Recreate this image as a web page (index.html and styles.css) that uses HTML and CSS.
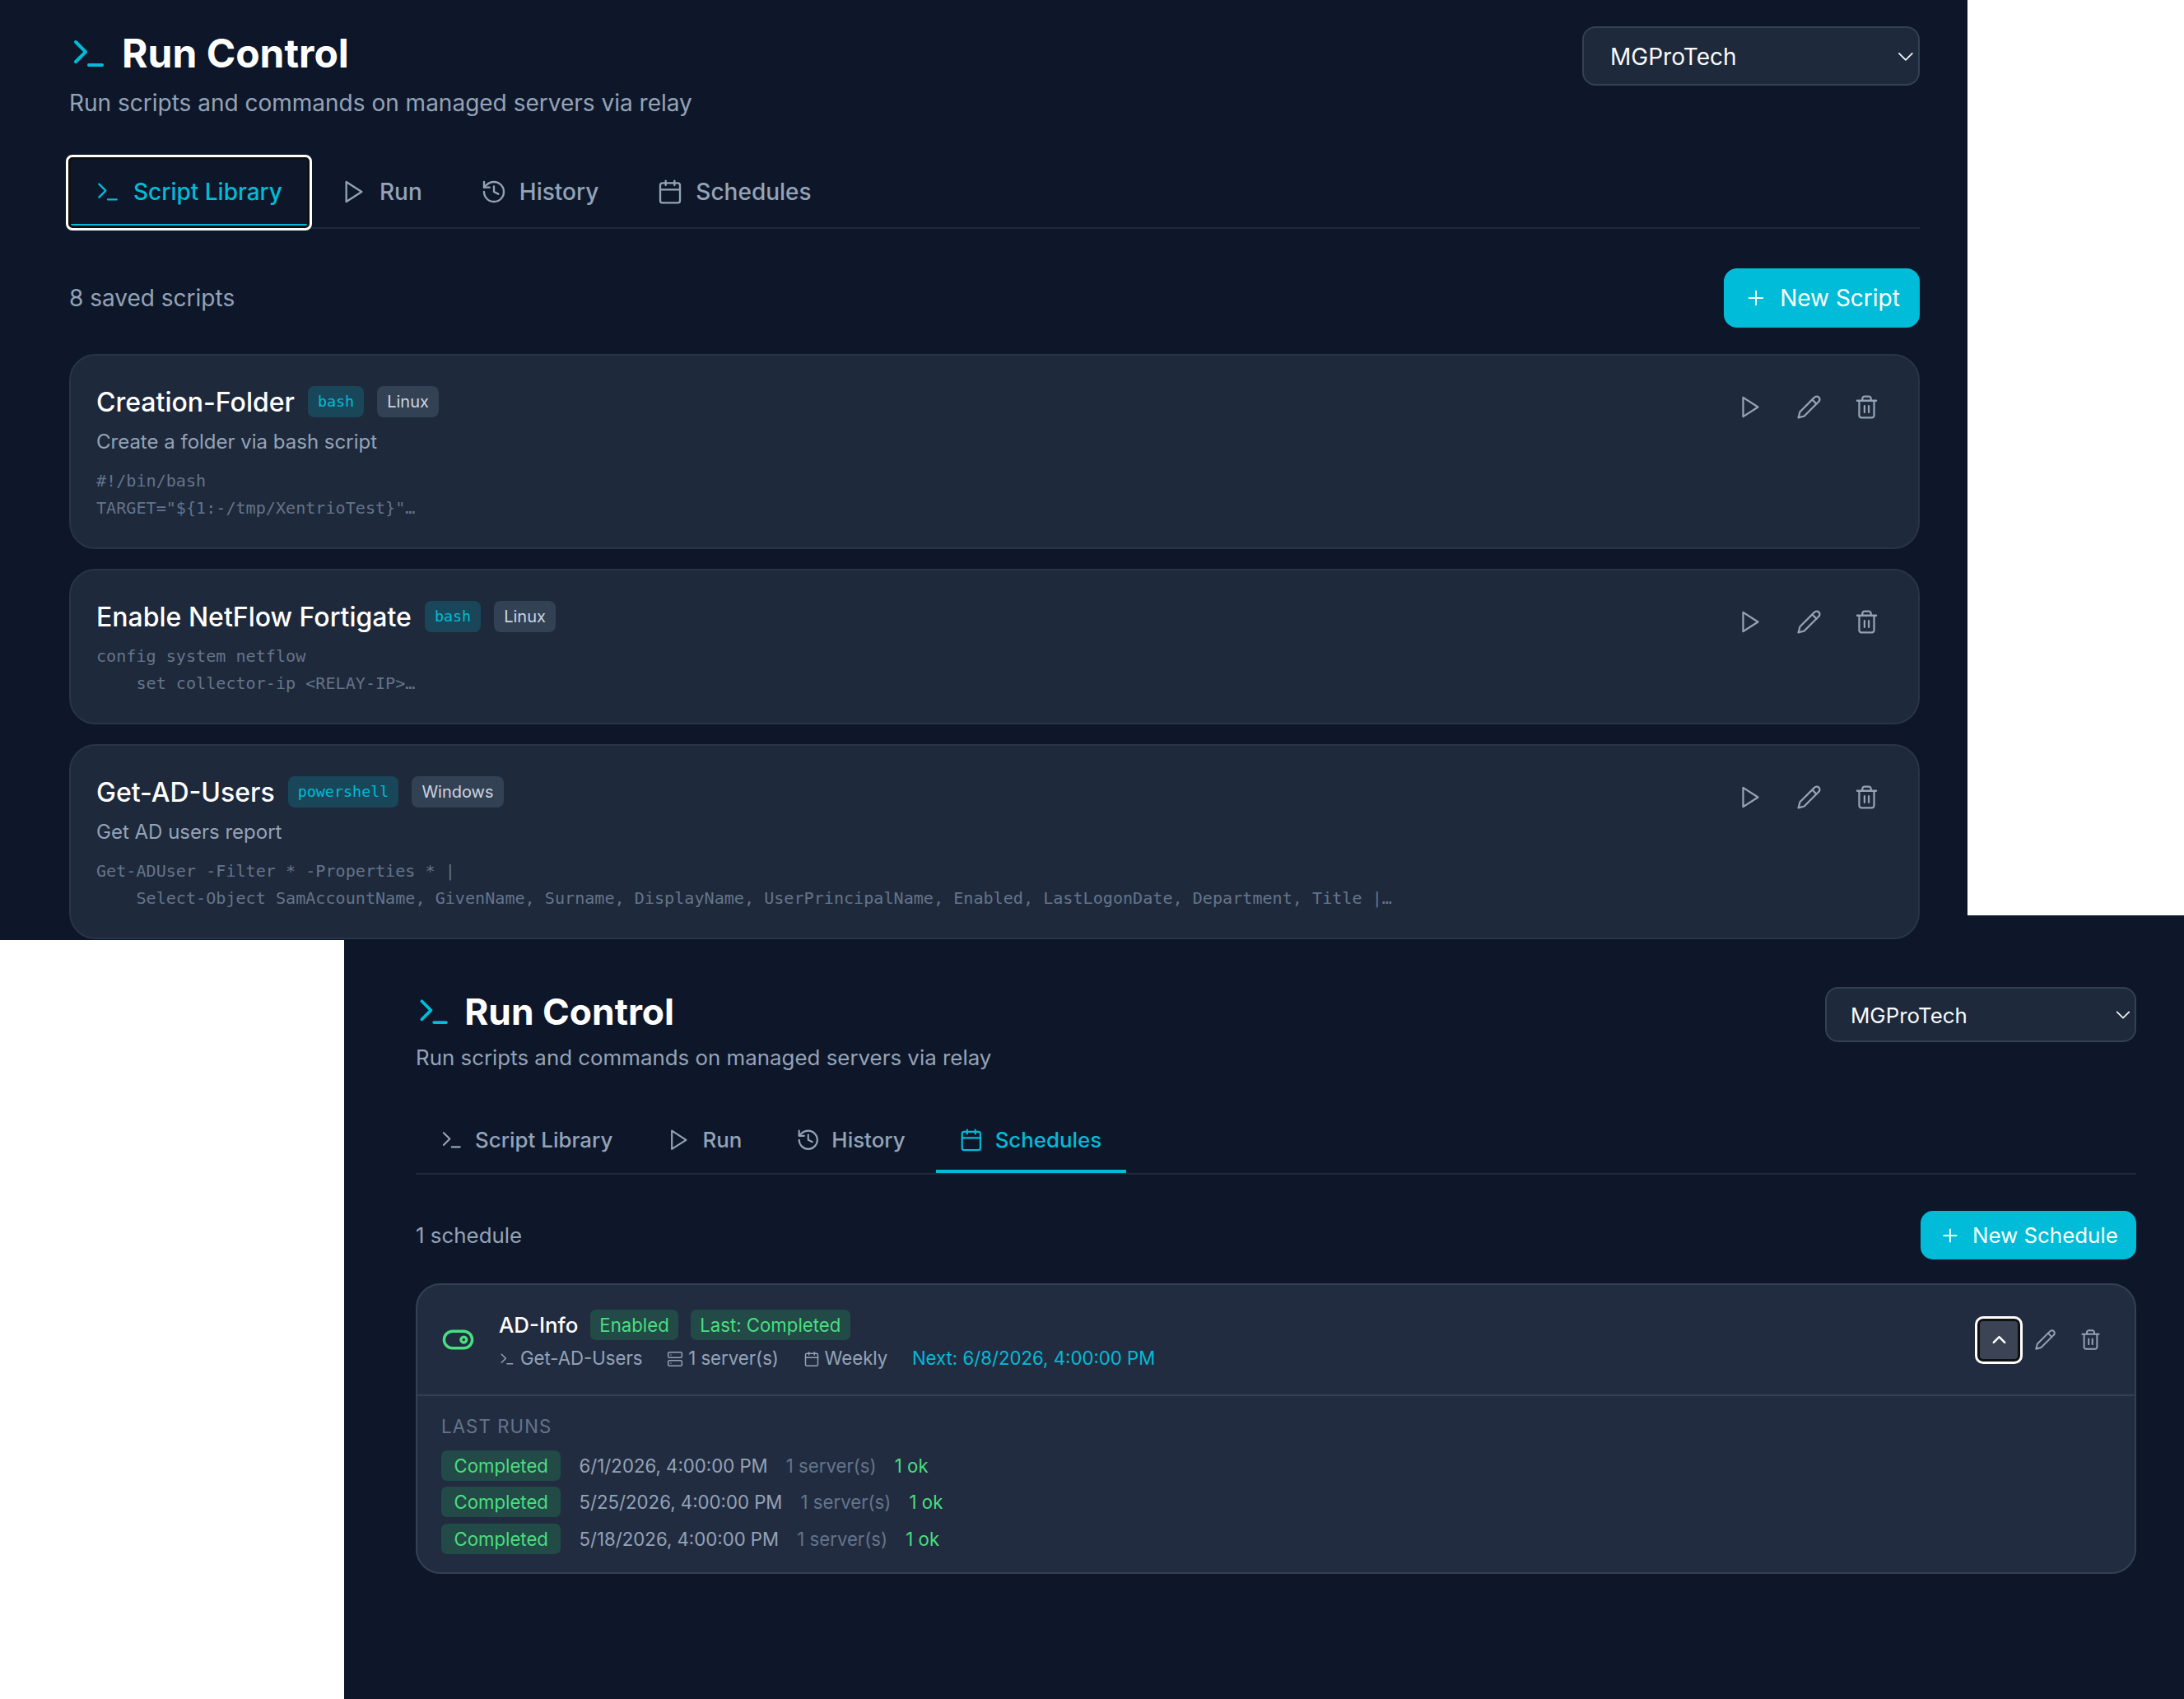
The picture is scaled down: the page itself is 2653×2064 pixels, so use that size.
FILE: index.html
```
<!DOCTYPE html>
<html lang="en">
<head>
    <meta charset="UTF-8">
    <title>Run Control</title>
    <link rel="stylesheet" href="styles.css">
</head>
<body>

<!-- icon set -->
<svg class="defs" width="0" height="0">
    <symbol id="i-terminal" viewBox="0 0 24 24"><path d="M4 17l6-6-6-6M12 19h8"/></symbol>
    <symbol id="i-play" viewBox="0 0 24 24"><path d="M5 3l14 9-14 9z"/></symbol>
    <symbol id="i-history" viewBox="0 0 24 24"><path d="M3 12a9 9 0 1 0 9-9 9.75 9.75 0 0 0-6.74 2.74L3 8"/><path d="M3 3v5h5M12 7v5l4 2"/></symbol>
    <symbol id="i-calendar" viewBox="0 0 24 24"><rect x="3" y="4" width="18" height="18" rx="2"/><path d="M8 2v4M16 2v4M3 10h18"/></symbol>
    <symbol id="i-plus" viewBox="0 0 24 24"><path d="M5 12h14M12 5v14"/></symbol>
    <symbol id="i-pencil" viewBox="0 0 24 24"><path d="M17 3a2.85 2.83 0 1 1 4 4L7.5 20.5 2 22l1.5-5.5Z"/><path d="M15 5l4 4"/></symbol>
    <symbol id="i-trash" viewBox="0 0 24 24"><path d="M3 6h18M19 6v14c0 1-1 2-2 2H7c-1 0-2-1-2-2V6M8 6V4c0-1 1-2 2-2h4c1 0 2 1 2 2v2M10 11v6M14 11v6"/></symbol>
    <symbol id="i-down" viewBox="0 0 24 24"><path d="M4 8l8 8 8-8"/></symbol>
    <symbol id="i-up" viewBox="0 0 24 24"><path d="M18 15l-6-6-6 6"/></symbol>
    <symbol id="i-server" viewBox="0 0 24 24"><rect x="2" y="2" width="20" height="8" rx="2"/><rect x="2" y="14" width="20" height="8" rx="2"/><path d="M6 6h.01M6 18h.01"/></symbol>
    <symbol id="i-toggle" viewBox="0 0 24 24"><rect x="2" y="6" width="20" height="12" rx="6"/><circle cx="16" cy="12" r="2"/></symbol>
</svg>

<div class="panel schedules">
    <div class="header">
        <div>
            <h1><svg class="icon"><use href="#i-terminal"/></svg>Run Control</h1>
            <p class="subtitle">Run scripts and commands on managed servers via relay</p>
        </div>
        <div class="select">MGProTech<svg class="icon"><use href="#i-down"/></svg></div>
    </div>
    <div class="tabs">
        <div class="tab"><svg class="icon"><use href="#i-terminal"/></svg>Script Library</div>
        <div class="tab"><svg class="icon"><use href="#i-play"/></svg>Run</div>
        <div class="tab"><svg class="icon"><use href="#i-history"/></svg>History</div>
        <div class="tab active"><svg class="icon"><use href="#i-calendar"/></svg>Schedules</div>
    </div>
    <div class="toolbar">
        <span>1 schedule</span>
        <div class="btn"><svg class="icon"><use href="#i-plus"/></svg>New Schedule</div>
    </div>
    <div class="schedule">
        <div class="schedule-head">
            <svg class="icon toggle"><use href="#i-toggle"/></svg>
            <div class="schedule-info">
                <div class="schedule-title">AD-Info <span class="badge">Enabled</span><span class="badge">Last: Completed</span></div>
                <div class="meta">
                    <span><svg class="icon"><use href="#i-terminal"/></svg>Get-AD-Users</span>
                    <span><svg class="icon"><use href="#i-server"/></svg>1 server(s)</span>
                    <span><svg class="icon"><use href="#i-calendar"/></svg>Weekly</span>
                    <span class="next">Next: 6/8/2026, 4:00:00 PM</span>
                </div>
            </div>
            <div class="schedule-actions">
                <div class="expand"><svg class="icon"><use href="#i-up"/></svg></div>
                <svg class="icon"><use href="#i-pencil"/></svg>
                <svg class="icon"><use href="#i-trash"/></svg>
            </div>
        </div>
        <div class="runs">
            <div class="runs-label">LAST RUNS</div>
            <div class="run"><span class="badge">Completed</span><span>6/1/2026, 4:00:00 PM</span><span class="dim">1 server(s)</span><span class="ok">1 ok</span></div>
            <div class="run"><span class="badge">Completed</span><span>5/25/2026, 4:00:00 PM</span><span class="dim">1 server(s)</span><span class="ok">1 ok</span></div>
            <div class="run"><span class="badge">Completed</span><span>5/18/2026, 4:00:00 PM</span><span class="dim">1 server(s)</span><span class="ok">1 ok</span></div>
        </div>
    </div>
</div>

<div class="panel library">
    <div class="header">
        <div>
            <h1><svg class="icon"><use href="#i-terminal"/></svg>Run Control</h1>
            <p class="subtitle">Run scripts and commands on managed servers via relay</p>
        </div>
        <div class="select">MGProTech<svg class="icon"><use href="#i-down"/></svg></div>
    </div>
    <div class="tabs">
        <div class="tab active focused"><svg class="icon"><use href="#i-terminal"/></svg>Script Library</div>
        <div class="tab"><svg class="icon"><use href="#i-play"/></svg>Run</div>
        <div class="tab"><svg class="icon"><use href="#i-history"/></svg>History</div>
        <div class="tab"><svg class="icon"><use href="#i-calendar"/></svg>Schedules</div>
    </div>
    <div class="toolbar">
        <span>8 saved scripts</span>
        <div class="btn"><svg class="icon"><use href="#i-plus"/></svg>New Script</div>
    </div>
    <div class="card">
        <div>
            <div class="card-title">Creation-Folder<span class="tag lang">bash</span><span class="tag">Linux</span></div>
            <div class="desc">Create a folder via bash script</div>
            <pre>#!/bin/bash
TARGET="${1:-/tmp/XentrioTest}"…</pre>
        </div>
        <div class="actions">
            <svg class="icon"><use href="#i-play"/></svg>
            <svg class="icon"><use href="#i-pencil"/></svg>
            <svg class="icon"><use href="#i-trash"/></svg>
        </div>
    </div>
    <div class="card">
        <div>
            <div class="card-title">Enable NetFlow Fortigate<span class="tag lang">bash</span><span class="tag">Linux</span></div>
            <pre>config system netflow
    set collector-ip &lt;RELAY-IP&gt;…</pre>
        </div>
        <div class="actions">
            <svg class="icon"><use href="#i-play"/></svg>
            <svg class="icon"><use href="#i-pencil"/></svg>
            <svg class="icon"><use href="#i-trash"/></svg>
        </div>
    </div>
    <div class="card">
        <div>
            <div class="card-title">Get-AD-Users<span class="tag lang">powershell</span><span class="tag">Windows</span></div>
            <div class="desc">Get AD users report</div>
            <pre>Get-ADUser -Filter * -Properties * |
    Select-Object SamAccountName, GivenName, Surname, DisplayName, UserPrincipalName, Enabled, LastLogonDate, Department, Title |…</pre>
        </div>
        <div class="actions">
            <svg class="icon"><use href="#i-play"/></svg>
            <svg class="icon"><use href="#i-pencil"/></svg>
            <svg class="icon"><use href="#i-trash"/></svg>
        </div>
    </div>
</div>

</body>
</html>
```
FILE: styles.css
```
*{
    box-sizing: border-box;
}
body{
    margin: 0;
    width: 2653px;
    height: 2064px;
    position: relative;
    overflow: hidden;
    background: #fff;
    font-family: Inter, sans-serif;
}
.defs{
    position: absolute;
}
/* the two windows overlap, library on top */
.panel{
    position: absolute;
    background: #0e1729;
    color: #94a3b8;
    overflow: hidden;
}
.library{
    left: 0;
    top: 0;
    width: 2390px;
    height: 1142px;
    padding: 32px 58px 0 84px;
    font-size: 28px;
}
.schedules{
    left: 418px;
    top: 1112px;
    width: 2235px;
    height: 952px;
    padding: 87px 58px 0 87px;
    font-size: 25.88px;
}
.icon{
    width: 1.143em;
    height: 1.143em;
    flex: none;
    fill: none;
    stroke: currentColor;
    stroke-width: 1.75;
    stroke-linecap: round;
    stroke-linejoin: round;
}
.header{
    display: flex;
    justify-content: space-between;
    align-items: flex-start;
    height: 160px;
}
.schedules .header{
    height: 148px;
}
h1{
    display: flex;
    align-items: center;
    gap: .335em;
    margin: 0;
    height: 66px;
    font-size: 1.714em;
    font-weight: 700;
    line-height: 66px;
    color: #fff;
}
.schedules h1{
    height: 61px;
    line-height: 61px;
}
h1 .icon{
    width: 1em;
    height: 1em;
    color: #00bcd8;
    stroke-width: 2;
}
.subtitle{
    margin: 7px 0 0;
    line-height: 40px;
}
.schedules .subtitle{
    margin-top: 5px;
}
.select{
    display: flex;
    align-items: center;
    justify-content: space-between;
    width: 410px;
    height: 72px;
    padding: 1px 3px 0 32px;
    border: 2px solid #334155;
    border-radius: 16px;
    background: #1e293b;
    color: #f8fafc;
}
.schedules .select{
    width: 378px;
    height: 67px;
    padding-left: 29px;
}
.select .icon{
    width: .85em;
    height: .85em;
}
.tabs{
    display: flex;
    gap: .286em;
    height: 86px;
    border-bottom: 2px solid #1e293b;
}
.schedules .tabs{
    height: 80px;
}
.tab{
    position: relative;
    display: flex;
    align-items: center;
    gap: .5em;
    padding: 1px 1.143em 0;
    border-bottom: 4px solid transparent;
    font-weight: 500;
}
.tab .icon{
    margin-left: -1px;
    margin-right: 1px;
}
.tab.active{
    color: #00bcd8;
    border-bottom-color: #00bcd8;
}
/* focus ring: black inside white */
.tab.focused::after{
    content: "";
    position: absolute;
    inset: -1px -1px -5px;
    border: 3px solid #101010;
    outline: 3px solid #fff;
    border-radius: 5px;
}
.toolbar{
    display: flex;
    align-items: center;
    justify-content: space-between;
    height: 72px;
    margin: 48px 0 32px;
}
.btn{
    display: flex;
    align-items: center;
    gap: .56em;
    height: 72px;
    padding: 0 .86em;
    border-radius: 16px;
    background: #00bcd8;
    color: #fff;
}
.btn .icon{
    width: 1em;
    height: 1em;
}
.schedules .toolbar{
    height: 59px;
    margin: 44px 0 29px;
}
.schedules .btn{
    height: 59px;
    border-radius: 15px;
}
.card{
    display: flex;
    justify-content: space-between;
    margin-bottom: 24px;
    padding: 32px 47px 31px 31px;
    border: 2px solid #283548;
    border-radius: 32px;
    background: #1e293b;
}
.card-title{
    display: flex;
    align-items: center;
    gap: 16px;
    height: 48px;
    font-size: 32px;
    font-weight: 500;
    color: #fff;
}
.tag{
    padding: 0 12px;
    border-radius: 8px;
    background: #334155;
    color: #cbd5e1;
    font-size: 20px;
    font-weight: 400;
    line-height: 38px;
}
.tag.lang{
    background: #194759;
    color: #00bcd8;
    font-family: "DejaVu Sans Mono", monospace;
    font-size: 18.4px;
}
.desc{
    font-size: 24px;
    line-height: 40px;
    margin: 5px 0 11px;
}
pre{
    margin: 8px 0 0;
    font-family: "DejaVu Sans Mono", monospace;
    font-size: 20.12px;
    line-height: 33px;
    color: #64748b;
}
.actions{
    display: flex;
    gap: 39.3px;
    padding-top: 15px;
}
.actions .icon{
    width: 31px;
    height: 31px;
}
.schedule{
    border: 2px solid #334155;
    border-radius: 30px;
    background: #222c40;
}
.schedule-head{
    display: flex;
    align-items: center;
    height: 135px;
    padding: 0 40px 0 29px;
    border-bottom: 2px solid #334155;
}
.toggle{
    width: 41px;
    height: 41px;
    color: #4ade80;
    stroke-width: 2;
}
.schedule-info{
    flex: 1;
    margin-left: 29px;
    padding-top: 7px;
}
.schedule-title{
    display: flex;
    align-items: center;
    gap: 14.5px;
    color: #fff;
    font-weight: 500;
}
.badge{
    padding: 0 11.5px;
    border-radius: 7px;
    background: #224a46;
    color: #4ade80;
    font-size: 22.2px;
    font-weight: 400;
    line-height: 37px;
}
.meta{
    display: flex;
    gap: 29.6px;
    font-size: 22.2px;
    line-height: 44px;
}
.meta span{
    display: flex;
    align-items: center;
    gap: 6px;
}
.meta .icon{
    width: 20px;
    height: 20px;
    margin-top: 2px;
}
.meta .next{
    color: #00bcd8;
}
.schedule-actions{
    display: flex;
    align-items: center;
    gap: 28px;
}
.schedule-actions .icon{
    width: 27px;
    height: 27px;
}
.expand{
    display: flex;
    align-items: center;
    justify-content: center;
    width: 58px;
    height: 58px;
    margin-right: -14px;
    border: 3px solid #fff;
    border-radius: 10px;
    box-shadow: inset 0 0 0 3px #101010;
    background: #3b4354;
    color: #fff;
}
.expand .icon{
    stroke-width: 2.2;
}
.runs{
    padding: 19px 29px 15px;
    font-size: 22.2px;
}
.runs-label{
    color: #64748b;
    letter-spacing: 1.1px;
    line-height: 36px;
    margin-bottom: 11px;
}
.run{
    display: flex;
    align-items: center;
    gap: 22.2px;
    margin-bottom: 7.4px;
}
.run .badge{
    padding: 0 15.5px;
}
.dim{
    color: #64748b;
}
.ok{
    color: #4ade80;
}
```
